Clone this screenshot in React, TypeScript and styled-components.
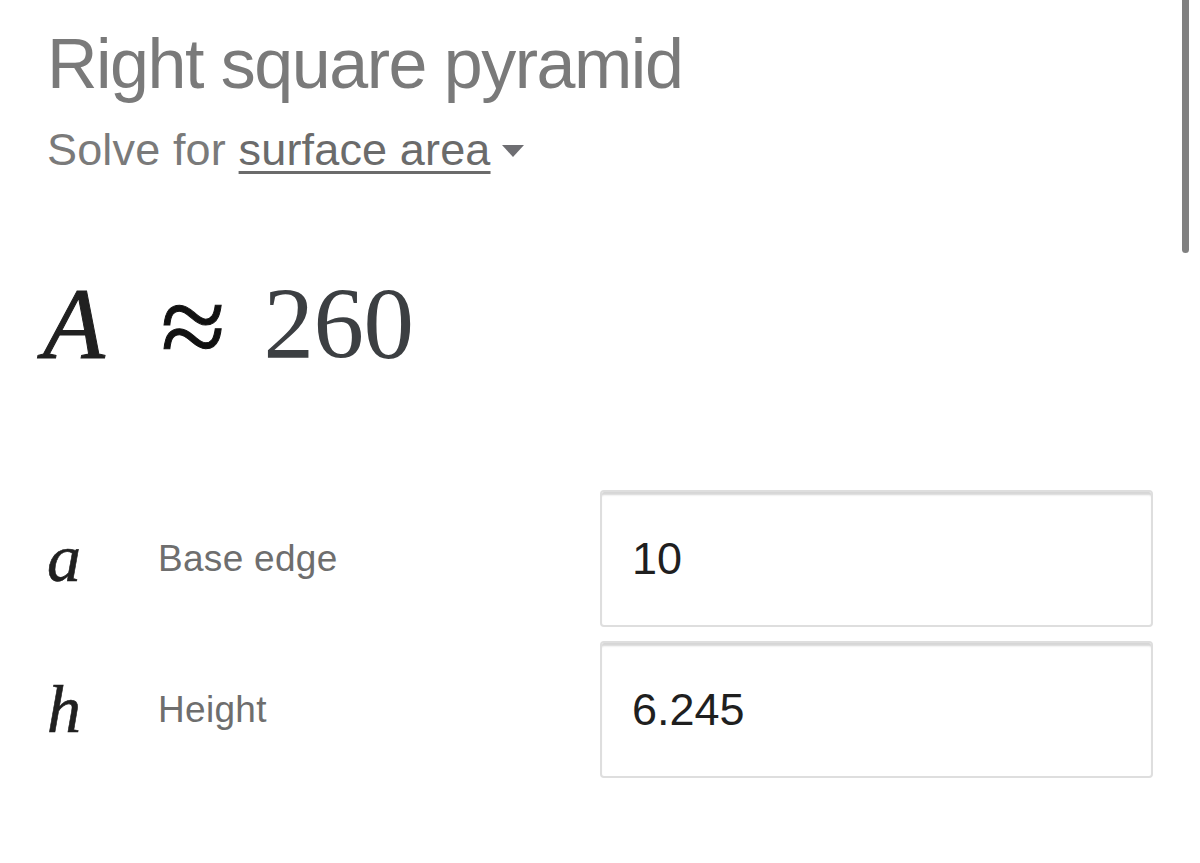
import React from "react";
import styled, {createGlobalStyle} from "styled-components";

const GlobalStyle = createGlobalStyle`
    html, body {
        margin: 0;
        padding: 0;
        background: #fff;
    }
    body {
        font-family: "Liberation Sans", Arial, sans-serif;
    }
`;

type Variable = {
    symbol: string,
    label: string,
    value: string
};

const variables: Variable[] = [
    {symbol: 'a', label: 'Base edge', value: '10'},
    {symbol: 'h', label: 'Height', value: '6.245'},
];

const App: React.FC = () => {
    return (
        <Page>
            <GlobalStyle />
            <Title>Right square pyramid</Title>
            <Subtitle>
                Solve for <SolveSelect>surface area</SolveSelect>
                <Caret />
            </Subtitle>
            <Result>
                <MathVar>A</MathVar>
                <Approx>≈</Approx>
                <ResultValue>260</ResultValue>
            </Result>
            <VarList>
                {variables.map(v => (
                    <VarRow key={v.symbol}>
                        <VarSymbol>{v.symbol}</VarSymbol>
                        <VarLabel>{v.label}</VarLabel>
                        <VarInput>{v.value}</VarInput>
                    </VarRow>
                ))}
            </VarList>
            <ScrollThumb />
        </Page>
    );
};

export default App;


const Page = styled.div`
    position: relative;
    box-sizing: border-box;
    width: 1200px;
    height: 863px;
    padding: 24px 47px 0 47px;
    overflow: hidden;
`;

const Title = styled.div`
    font-size: 70px;
    line-height: 80px;
    color: #7a7a7a;
    letter-spacing: -1.5px;
`;

const Subtitle = styled.div`
    display: flex;
    align-items: center;
    margin-top: 21px;
    font-size: 45px;
    line-height: 50px;
    letter-spacing: 0.15px;
    color: #7a7a7a;
    white-space: pre;
`;

const SolveSelect = styled.span`
    color: #6b6b6b;
    text-decoration: underline;
    text-decoration-thickness: 3px;
    text-underline-offset: 6px;
`;

const Caret = styled.span`
    width: 0;
    height: 0;
    margin: 2px 0 0 11px;
    border-left: 11px solid transparent;
    border-right: 11px solid transparent;
    border-top: 12px solid #6e6e72;
`;

const Result = styled.div`
    margin-top: 89px;
    margin-left: -4px;
    font-family: "Liberation Serif", "Times New Roman", serif;
    font-size: 101px;
    line-height: 120px;
    height: 120px;
    color: #3c3f42;
    white-space: nowrap;
`;

const MathVar = styled.span`
    font-style: italic;
    color: #202020;
    -webkit-text-stroke: 1px #202020;
`;

const Approx = styled.span`
    display: inline-block;
    margin: 0 38px 0 56px;
    font-size: 118px;
    line-height: 100px;
    vertical-align: -8px;
    color: #111;
    -webkit-text-stroke: 1px #111;
`;

const ResultValue = styled.span`
    letter-spacing: -0.5px;
`;

const VarList = styled.div`
    display: flex;
    flex-direction: column;
    gap: 14px;
    margin-top: 106px;
`;

const VarRow = styled.div`
    display: grid;
    grid-template-columns: 111px 1fr 553px;
    align-items: center;
    height: 137px;
`;

const VarSymbol = styled.div`
    font-family: "Liberation Serif", "Times New Roman", serif;
    font-style: italic;
    font-size: 68px;
    color: #202020;
    -webkit-text-stroke: 0.6px #202020;
`;

const VarLabel = styled.div`
    font-size: 37px;
    letter-spacing: 0.3px;
    color: #6e6e6e;
`;

const VarInput = styled.div`
    box-sizing: border-box;
    display: flex;
    align-items: center;
    height: 137px;
    padding-left: 30px;
    border: 2px solid #dedede;
    border-radius: 4px;
    box-shadow: inset 0 4px 2px -1px #d6d6d6;
    font-size: 45px;
    color: #1f1f1f;
`;

const ScrollThumb = styled.div`
    position: absolute;
    top: 0;
    right: 11px;
    width: 7px;
    height: 253px;
    border-radius: 0 0 4px 4px;
    background: #808080;
`;
